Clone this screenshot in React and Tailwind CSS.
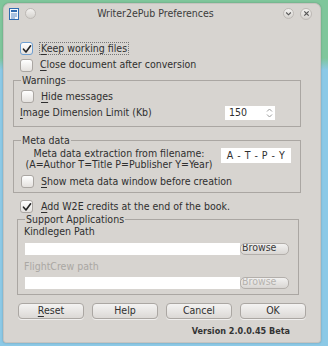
import React from "react";

const font = "font-['DejaVu_Sans_Condensed','DejaVu_Sans',sans-serif] font-stretch-condensed";

function Check({ checked, focus }) {
  return (
    <span
      className={
        focus
          ? "w-[13px] h-[13px] rounded-[3px] border border-[#6d9fd2] bg-gradient-to-b from-white to-[#e4e1de] flex items-center justify-center shrink-0"
          : "w-[13px] h-[13px] rounded-[3px] border border-[#aaa6a2] bg-gradient-to-b from-white to-[#e4e1de] flex items-center justify-center shrink-0"
      }
    >
      {checked && (
        <svg width="10" height="10" viewBox="0 0 10 10">
          <path d="M1.5 5.2 L4 8 L8.6 1.8" fill="none" stroke="#222" strokeWidth="1.6" strokeLinecap="round" strokeLinejoin="round" />
        </svg>
      )}
    </span>
  );
}

function U({ children }) {
  return <span className="underline underline-offset-[2px]">{children}</span>;
}

function Btn({ children }) {
  return (
    <div className="h-[16px] rounded-[4px] border border-[#aba7a3] bg-gradient-to-b from-[#f4f3f2] to-[#dcd9d6] shadow-[0_1px_0_#f0efee] flex items-center justify-center text-[#303030]">
      {children}
    </div>
  );
}

function Browse({ disabled }) {
  return (
    <div className="w-[49px] h-[12px] rounded-[5px] border border-[#b3afab] bg-gradient-to-b from-[#f2f1f0] to-[#d9d6d3] overflow-hidden flex justify-start pl-[1px]">
      <span className={disabled ? "leading-[12px] -mt-[3px] text-[#b5b2ae]" : "leading-[12px] -mt-[3px] text-[#3a3a3a]"}>
        Browse
      </span>
    </div>
  );
}

export default function App() {
  return (
    <div className={`w-[328px] h-[346px] overflow-hidden bg-[linear-gradient(180deg,#7fc69b_0px,#7fc69b_58px,#8cc9e6_70px,#8cc9e6_100%)] pl-[3px] pt-[3px] ${font}`}>
      <div className="w-[318px] h-[340px] bg-[#d7d4d0] border border-[#c6c3bf] rounded-t-[6px] rounded-b-[3px] text-[10.5px] text-[#2f2f2f] shadow-[0_0_2px_rgba(0,0,0,0.25)]">
        {/* title bar */}
        <div className="h-[19px] flex items-center px-[4px]">
          <svg width="10" height="12" viewBox="0 0 10 12" className="ml-[1px]">
            <rect x="0.5" y="0.5" width="9" height="11" fill="#f4f8fc" stroke="#2f6bb0" />
            <rect x="2" y="2" width="6" height="2" fill="#2f6bb0" />
            <rect x="2" y="5.5" width="6" height="1" fill="#5c8cc4" />
            <rect x="2" y="7.5" width="6" height="1" fill="#5c8cc4" />
            <rect x="2" y="9.5" width="4" height="1" fill="#5c8cc4" />
          </svg>
          <span className="ml-[6px] w-[11px] h-[11px] rounded-full border border-[#bdb9b5] bg-gradient-to-b from-[#f3f2f0] to-[#d5d2ce]" />
          <div className="flex-1 text-center text-[#3c3c3c] text-[10.5px] -ml-[8px]">Writer2ePub Preferences</div>
          <span className="w-[11px] h-[11px] rounded-full border border-[#bdb9b5] bg-gradient-to-b from-[#f3f2f0] to-[#d5d2ce] flex items-center justify-center">
            <svg width="7" height="7" viewBox="0 0 7 7"><path d="M1.2 2.5 L3.5 4.8 L5.8 2.5" fill="none" stroke="#555" strokeWidth="1.1" /></svg>
          </span>
          <span className="ml-[6px] mr-[4px] w-[12px] h-[12px] rounded-full border border-[#bdb9b5] bg-gradient-to-b from-[#f3f2f0] to-[#d5d2ce] flex items-center justify-center">
            <svg width="7" height="7" viewBox="0 0 7 7"><path d="M1.3 1.3 L5.7 5.7 M5.7 1.3 L1.3 5.7" fill="none" stroke="#555" strokeWidth="1.2" /></svg>
          </span>
        </div>

        {/* Keep working files */}
        <div className="mt-[17px] h-[17px] flex items-center pl-[16px] gap-[6px]">
          <Check checked focus />
          <span className="border border-dotted border-[#777] px-[1px] leading-[11px]">
            <U>K</U>eep working files
          </span>
        </div>
        <div className="h-[16px] flex items-center pl-[16px] gap-[7px]">
          <Check />
          <span>
            <U>C</U>lose document after conversion
          </span>
        </div>

        {/* Warnings */}
        <fieldset className="ml-[9px] mt-[1px] w-[288px] border border-[#aaa6a2] pt-[1px] pb-[5px]">
          <legend className="ml-[7px] px-[1px] leading-[13px]">Warnings</legend>
          <div className="h-[17px] flex items-center pl-[7px] gap-[7px]">
            <Check />
            <span>
              <U>H</U>ide messages
            </span>
          </div>
          <div className="h-[16px] flex items-center pl-[6px]">
            <span>
              <U>I</U>mage Dimension Limit (Kb)
            </span>
            <div className="ml-auto mr-[25px] w-[50px] h-[14px] bg-white flex items-center pl-[4px]">
              <span className="flex-1">150</span>
              <svg width="7" height="12" viewBox="0 0 7 12" className="mr-[2px]">
                <path d="M1 4.5 L3.5 2 L6 4.5 M1 7.5 L3.5 10 L6 7.5" fill="none" stroke="#9a9a9a" strokeWidth="1" />
              </svg>
            </div>
          </div>
        </fieldset>

        {/* Meta data */}
        <fieldset className="ml-[9px] mt-[7px] w-[288px] border border-[#aaa6a2] pb-[2px]">
          <legend className="ml-[7px] px-[1px] leading-[13px]">Meta data</legend>
          <div className="flex items-start pt-[1px]">
            <div className="ml-[3px] w-[204px] flex flex-col items-center leading-[10.5px] whitespace-nowrap">
              <div>Meta data extraction from filename:</div>
              <div>(A=Author T=Title P=Publisher Y=Year)</div>
            </div>
            <div className="w-[70px] h-[15px] bg-white flex items-center justify-center tracking-[0.5px]">A - T - P - Y</div>
          </div>
          <div className="mt-[4px] h-[17px] flex items-center pl-[7px] gap-[7px]">
            <Check />
            <span>
              <U>S</U>how meta data window before creation
            </span>
          </div>
        </fieldset>

        {/* Add W2E */}
        <div className="mt-[5px] h-[17px] flex items-center pl-[16px] gap-[8px]">
          <Check checked />
          <span>
            <U>A</U>dd W2E credits at the end of the book.
          </span>
        </div>

        {/* Support Applications */}
        <fieldset className="ml-[13px] -mt-[2px] w-[282px] border border-[#aaa6a2] pb-[5px] pl-[6px] pr-[9px]">
          <legend className="ml-[1px] px-[1px] leading-[13px]">Support Applications</legend>
          <div className="h-[12px] flex items-center">Kindlegen Path</div>
          <div className="mt-[5px] flex items-center pl-[1px]">
            <div className="w-[215px] h-[12px] bg-white" />
            <Browse />
          </div>
          <div className="mt-[6px] h-[12px] flex items-center text-[#aaa7a3]">FlightCrew path</div>
          <div className="mt-[4px] flex items-center pl-[1px]">
            <div className="w-[215px] h-[12px] bg-white" />
            <Browse disabled />
          </div>
        </fieldset>

        {/* Buttons */}
        <div className="mt-[8px] pl-[14px] grid grid-cols-4 gap-[8px] w-[302px]">
          <Btn>
            <span>
              <U>R</U>eset
            </span>
          </Btn>
          <Btn>Help</Btn>
          <Btn>Cancel</Btn>
          <Btn>OK</Btn>
        </div>

        <div className="mt-[6px] h-[12px] pr-[30px] text-right text-[9px] font-bold text-[#333] leading-[12px]">
          Version 2.0.0.45 Beta
        </div>
      </div>
    </div>
  );
}
